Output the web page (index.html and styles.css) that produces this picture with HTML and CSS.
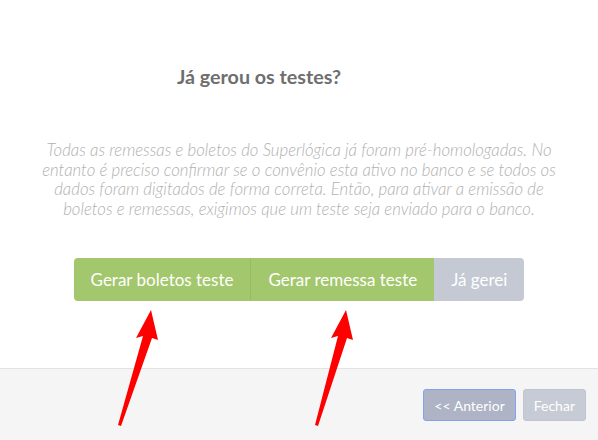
FILE: index.html
```html
<!DOCTYPE html>
<html>
<head>
    <meta charset="UTF-8">
    <title>Homologação</title>
    <link rel="stylesheet" href="styles.css">
</head>
<body>
    <div class="modal">
        <div class="modal-body">
            <h3>Já gerou os testes?</h3>
            <p class="info">
                Todas as remessas e boletos do Superlógica já foram pré-homologadas. No
                entanto é preciso confirmar se o convênio esta ativo no banco e se todos os
                dados foram digitados de forma correta. Então, para ativar a emissão de
                boletos e remessas, exigimos que um teste seja enviado para o banco.
            </p>
            <div class="btn-group">
                <button class="btn btn-green">Gerar boletos teste</button>
                <button class="btn btn-green">Gerar remessa teste</button>
                <button class="btn btn-gray">Já gerei</button>
            </div>
        </div>
        <div class="modal-footer">
            <button class="btn-sm btn-prev">&lt;&lt; Anterior</button>
            <button class="btn-sm btn-close">Fechar</button>
        </div>
        <!-- setas de anotação -->
        <svg class="arrows" width="598" height="440" viewBox="0 0 598 440">
            <polygon points="151,310 158,340 152,338 121,426 118,425 143,336 136,338" fill="#ff0000"/>
            <polygon points="346,310 353,340 347,338 318,426 315,425 338,336 331,338" fill="#ff0000"/>
        </svg>
    </div>
</body>
</html>
```
FILE: styles.css
```css
body {
    margin: 0;
    font-family: Lato, "Open Sans", sans-serif;
    background-color: white;
}
.modal {
    width: 598px;
    height: 440px;
    display: flex;
    flex-direction: column;
    position: relative;
}
.modal-body {
    flex: 1;
    text-align: center;
    padding: 0 20px;
}
h3 {
    margin: 64px 0 0;
    padding-right: 80px;
    font-size: 19.7px;
    font-weight: 700;
    color: #6e6e6e;
    line-height: 26px;
}
.info {
    max-width: 514px;
    margin: 50px auto 0;
    font-size: 16.8px;
    font-style: italic;
    font-weight: 300;
    color: #b1b1b1;
    line-height: 19.5px;
}
.btn-group {
    display: inline-flex;
    margin-top: 40px;
    border-radius: 4px;
    overflow: hidden;
}
.btn {
    border: none;
    font-family: inherit;
    font-size: 17px;
    color: white;
    height: 43px;
    padding: 0 17px;
}
.btn-green {
    background-color: #a3c76c;
}
.btn-green + .btn-green {
    border-left: 1px solid #97bd62;
}
.btn-gray {
    background-color: #c5c9d4;
}
.modal-footer {
    height: 72px;
    border-top: 1px solid #e2e2e2;
    background-color: #f5f5f5;
    display: flex;
    justify-content: flex-end;
    align-items: flex-start;
    padding: 20px 12px 0;
    gap: 7px;
    box-sizing: border-box;
}
.btn-sm {
    font-family: inherit;
    font-size: 14px;
    color: white;
    height: 32px;
    border-radius: 3px;
}
.btn-prev {
    background-color: #aeb4c5;
    border: 1px solid #7ea4f0;
    padding: 0 10px;
}
.btn-close {
    background-color: #c7cbd5;
    border: 1px solid #c0c4ce;
    padding: 0 10px;
}
.arrows {
    position: absolute;
    left: 0;
    top: 0;
    pointer-events: none;
}
```
